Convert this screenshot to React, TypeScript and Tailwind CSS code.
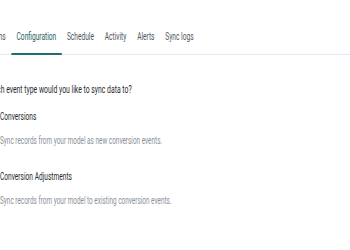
import { useState } from "react";

const tabs = ["Runs", "Configuration", "Schedule", "Activity", "Alerts", "Sync logs"];

const options = [
  {
    id: "conversions",
    label: "Conversions",
    description: "Sync records from your model as new conversion events.",
  },
  {
    id: "adjustments",
    label: "Conversion Adjustments",
    description: "Sync records from your model to existing conversion events.",
  },
];

export default function App() {
  const [active, setActive] = useState("Configuration");
  const [selected, setSelected] = useState("conversions");

  return (
    <div className="w-[350px] h-[250px] overflow-hidden bg-white font-['Roboto',sans-serif] text-[11px] leading-4">
      {/* the page is squeezed horizontally */}
      <div className="w-[608px] origin-left scale-x-[0.6]">
        <div className="-ml-6">
          <div className="flex border-b border-[#e8e9ee] pt-[21px]">
            {tabs.map((tab) => (
              <button
                key={tab}
                onClick={() => setActive(tab)}
                className={
                  tab === active
                    ? "px-[9px] pt-2 pb-2 -mb-px border-b-2 border-[#1f6f6c] text-[#21615e]"
                    : "px-[9px] pt-2 pb-2 -mb-px border-b-2 border-transparent text-[#50555c]"
                }
              >
                {tab}
              </button>
            ))}
          </div>

          <div className="mt-[26px]">
            <p className="text-[11.4px] text-[#262a30]">Which event type would you like to sync data to?</p>

            <div className="mt-3 flex flex-col gap-5">
              {options.map((opt) => (
                <label key={opt.id} className="flex gap-2 cursor-pointer">
                  <input
                    type="radio"
                    name="eventType"
                    checked={selected === opt.id}
                    onChange={() => setSelected(opt.id)}
                    className="w-4 h-4 accent-[#1f6f6c]"
                  />
                  <div className="flex flex-col gap-2">
                    <span className="text-[#262a30]">{opt.label}</span>
                    <span className="text-[10.7px] text-[#8a9099]">{opt.description}</span>
                  </div>
                </label>
              ))}
            </div>
          </div>
        </div>
      </div>
    </div>
  );
}
